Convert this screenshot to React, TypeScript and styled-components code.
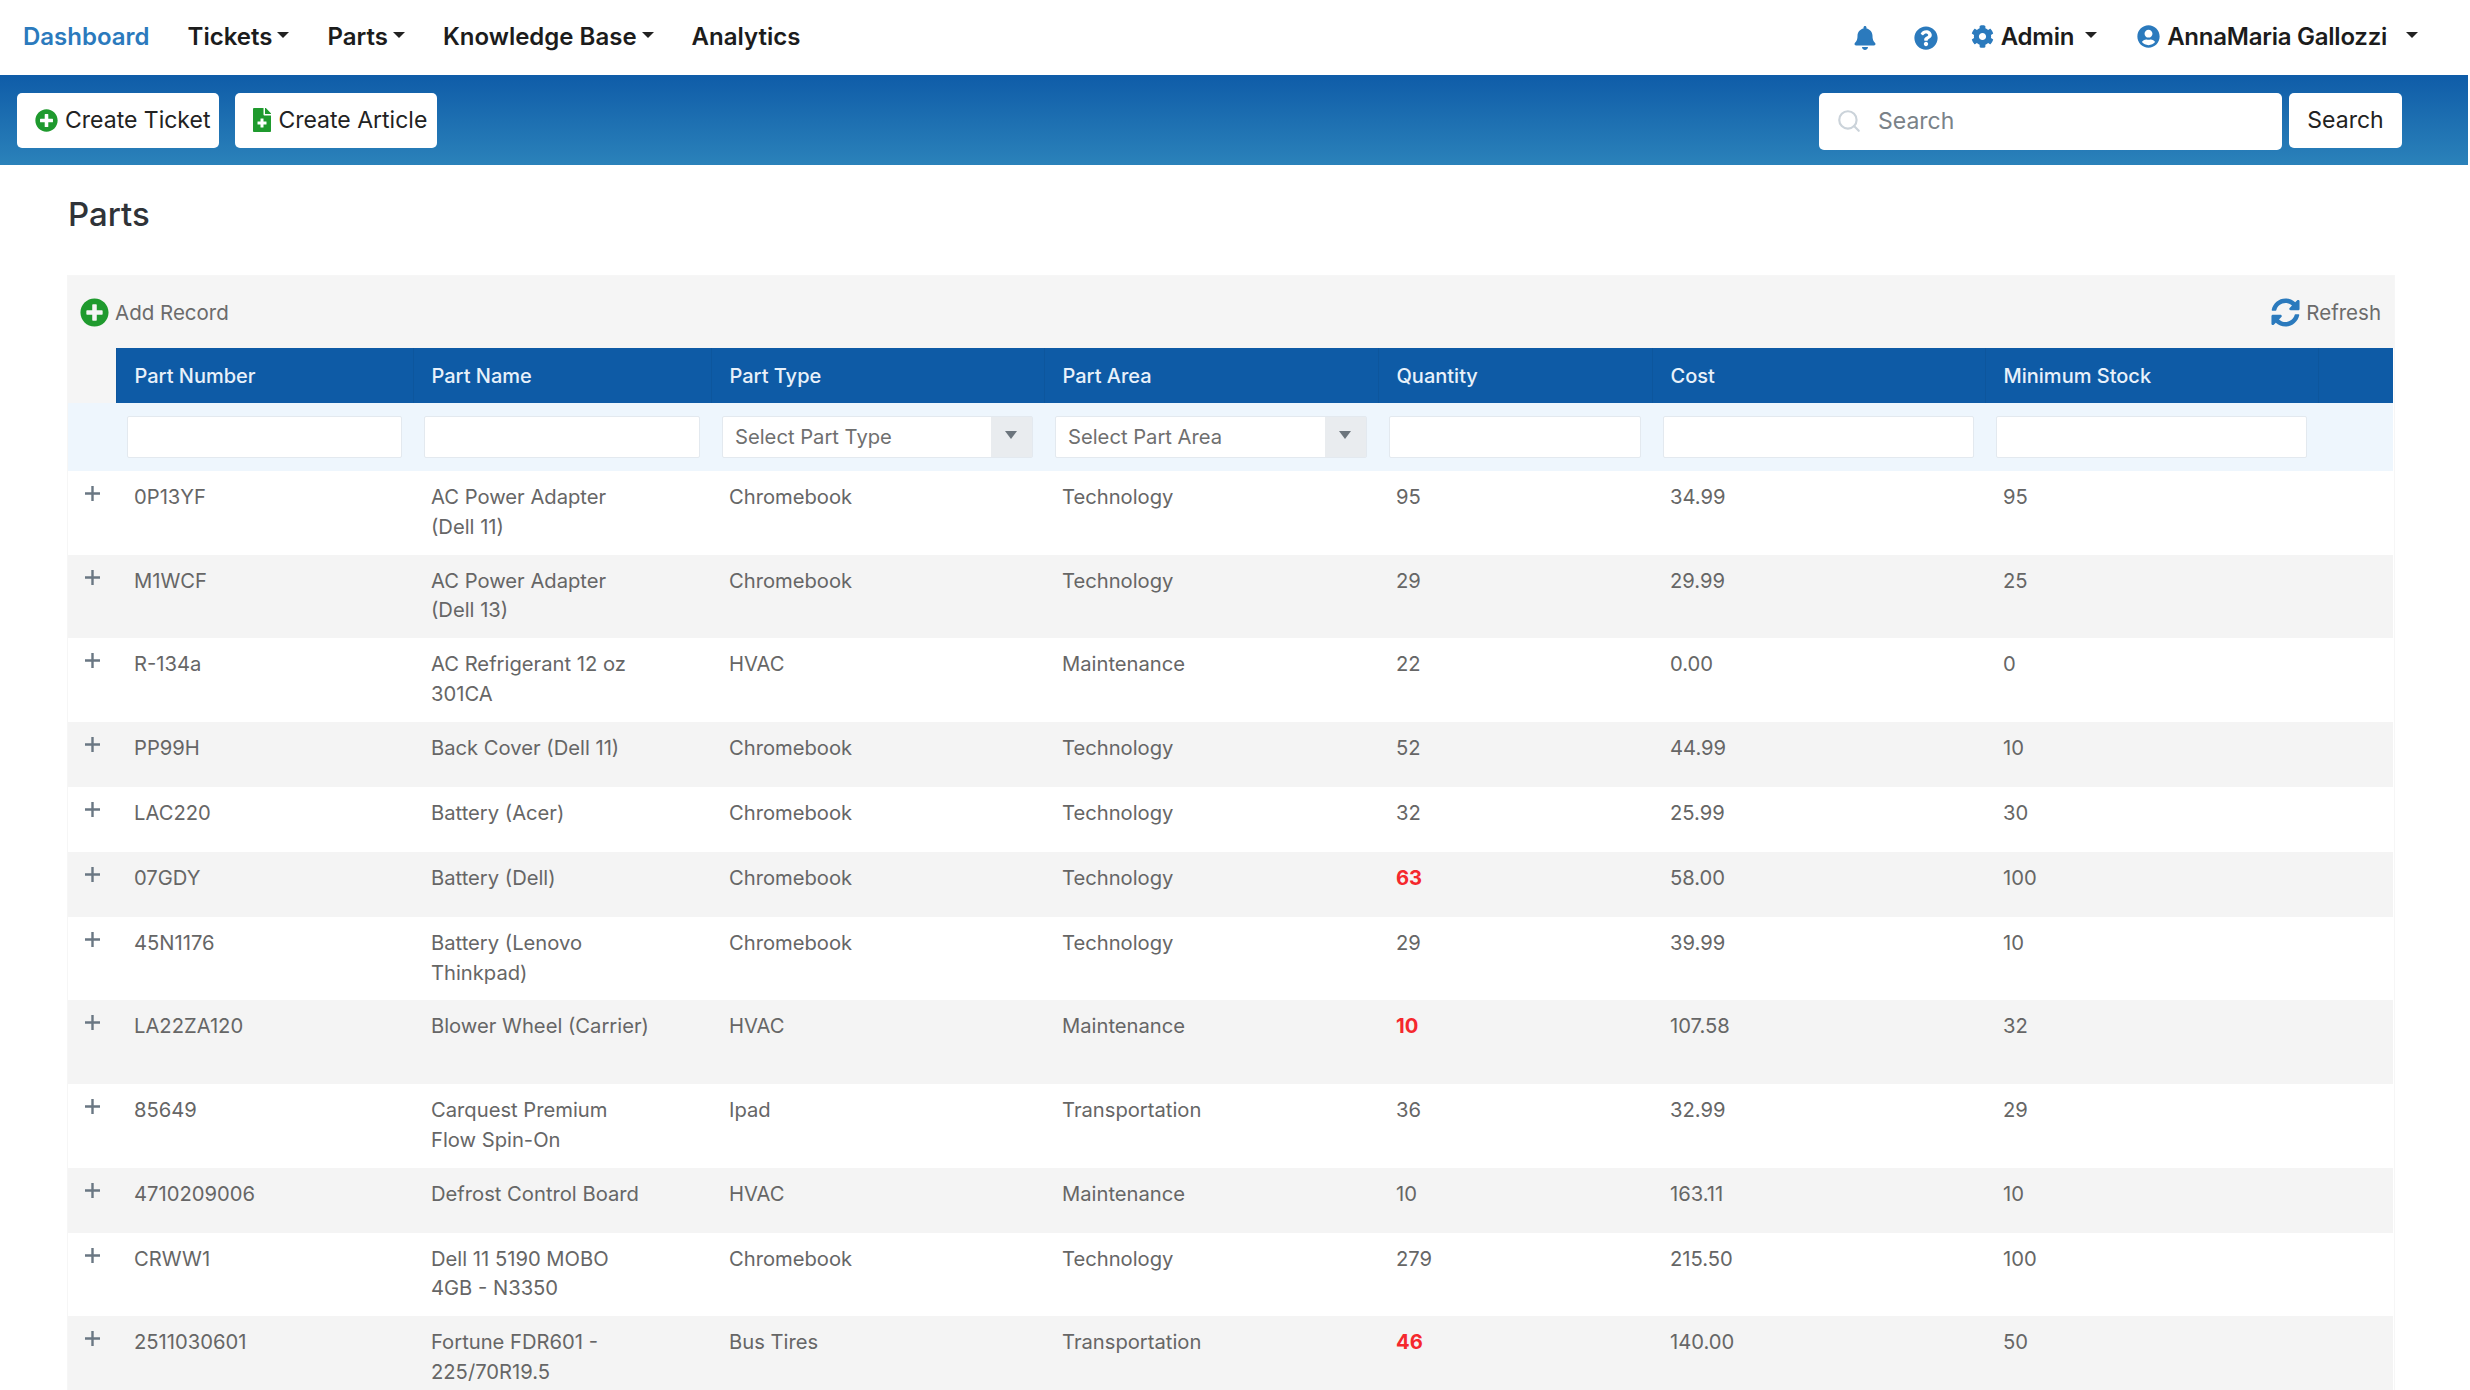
import React from "react";
import styled, { createGlobalStyle } from "styled-components";
import {
  FaBell,
  FaCog,
  FaFileMedical,
  FaPlusCircle,
  FaQuestionCircle,
  FaSyncAlt,
  FaUserCircle,
} from "react-icons/fa";
import { Search as SearchIcon } from "lucide-react";

const FONT = `Inter, "Liberation Sans", sans-serif`;

const parts = [
  ["0P13YF", "AC Power Adapter (Dell 11)", "Chromebook", "Technology", "95", "34.99", "95"],
  ["M1WCF", "AC Power Adapter (Dell 13)", "Chromebook", "Technology", "29", "29.99", "25"],
  ["R-134a", "AC Refrigerant 12 oz 301CA", "HVAC", "Maintenance", "22", "0.00", "0"],
  ["PP99H", "Back Cover (Dell 11)", "Chromebook", "Technology", "52", "44.99", "10"],
  ["LAC220", "Battery (Acer)", "Chromebook", "Technology", "32", "25.99", "30"],
  ["07GDY", "Battery (Dell)", "Chromebook", "Technology", "63", "58.00", "100"],
  ["45N1176", "Battery (Lenovo Thinkpad)", "Chromebook", "Technology", "29", "39.99", "10"],
  ["LA22ZA120", "Blower Wheel (Carrier)", "HVAC", "Maintenance", "10", "107.58", "32"],
  ["85649", "Carquest Premium Flow Spin-On", "Ipad", "Transportation", "36", "32.99", "29"],
  ["4710209006", "Defrost Control Board", "HVAC", "Maintenance", "10", "163.11", "10"],
  ["CRWW1", "Dell 11 5190 MOBO 4GB - N3350", "Chromebook", "Technology", "279", "215.50", "100"],
  ["2511030601", "Fortune FDR601 - 225/70R19.5", "Bus Tires", "Transportation", "46", "140.00", "50"],
];

const columns = [48, 297, 298, 333, 334, 274, 333, 333, 75];

export default function App() {
  return (
    <>
      <GlobalStyle />
      <Page>
        <TopNav>
          <NavLinks>
            <NavLink $active>Dashboard</NavLink>
            <NavLink>
              Tickets
              <Caret />
            </NavLink>
            <NavLink>
              Parts
              <Caret />
            </NavLink>
            <NavLink>
              Knowledge Base
              <Caret />
            </NavLink>
            <NavLink>Analytics</NavLink>
          </NavLinks>
          <NavRight>
            <NavIcons>
              <NavIcon>
                <FaBell size={24} />
              </NavIcon>
              <NavIcon>
                <FaQuestionCircle size={24} />
              </NavIcon>
            </NavIcons>
            <NavMenu>
              <FaCog size={23} color="#2b7abd" />
              Admin
              <MenuCaret $gap={4} $after={7} />
            </NavMenu>
            <NavMenu>
              <FaUserCircle size={23} color="#2b7abd" />
              AnnaMaria Gallozzi
              <MenuCaret $gap={12} />
            </NavMenu>
          </NavRight>
        </TopNav>

        <ActionBar>
          <ActionGroup>
            <ActionButton>
              <FaPlusCircle size={23} color="#1f9a2e" />
              Create Ticket
            </ActionButton>
            <ActionButton>
              <ArticleIcon />
              Create Article
            </ActionButton>
          </ActionGroup>
          <SearchGroup>
            <SearchBox>
              <SearchIcon size={26} color="#cbd3da" strokeWidth={2} />
              <SearchInput placeholder="Search" />
            </SearchBox>
            <SearchButton>Search</SearchButton>
          </SearchGroup>
        </ActionBar>

        <Main>
          <Title>Parts</Title>
          <Grid>
            <Toolbar>
              <ToolLink>
                <FaPlusCircle size={29} color="#1f9a2e" />
                Add Record
              </ToolLink>
              <ToolLink>
                <FaSyncAlt size={29} color="#2b7abd" />
                Refresh
              </ToolLink>
            </Toolbar>
            <Table>
              <colgroup>
                {columns.map((w, i) => (
                  <col key={i} width={w} />
                ))}
              </colgroup>
              <thead>
                <tr>
                  <CornerCell />
                  <HeadCell>Part Number</HeadCell>
                  <HeadCell>Part Name</HeadCell>
                  <HeadCell>Part Type</HeadCell>
                  <HeadCell>Part Area</HeadCell>
                  <HeadCell>Quantity</HeadCell>
                  <HeadCell>Cost</HeadCell>
                  <HeadCell>Minimum Stock</HeadCell>
                  <HeadCell />
                </tr>
                <tr>
                  <FilterCell />
                  <FilterCell>
                    <FilterInput />
                  </FilterCell>
                  <FilterCell>
                    <FilterInput />
                  </FilterCell>
                  <FilterCell>
                    <FilterSelect>
                      <SelectLabel>Select Part Type</SelectLabel>
                      <SelectArrow />
                    </FilterSelect>
                  </FilterCell>
                  <FilterCell>
                    <FilterSelect>
                      <SelectLabel>Select Part Area</SelectLabel>
                      <SelectArrow />
                    </FilterSelect>
                  </FilterCell>
                  <FilterCell>
                    <FilterInput />
                  </FilterCell>
                  <FilterCell>
                    <FilterInput />
                  </FilterCell>
                  <FilterCell>
                    <FilterInput />
                  </FilterCell>
                  <FilterCell />
                </tr>
              </thead>
              <tbody>
                {parts.map((row) => (
                  <Row key={row[0]} $tall={row[0] === "LA22ZA120"}>
                    <ExpandCell>
                      <svg width="15" height="15" viewBox="0 0 15 15">
                        <path d="M7.5 0v15M0 7.5h15" stroke="#6a7783" strokeWidth="2.4" fill="none" />
                      </svg>
                    </ExpandCell>
                    {row.map((value, i) => (
                      <Cell key={i}>
                        {i === 4 && Number(value) < Number(row[6]) ? <LowStock>{value}</LowStock> : value}
                      </Cell>
                    ))}
                    <Cell />
                  </Row>
                ))}
              </tbody>
            </Table>
          </Grid>
        </Main>
      </Page>
    </>
  );
}

const GlobalStyle = createGlobalStyle`
  html, body {
    margin: 0;
    height: 100%;
    background: #fff;
    overflow: hidden;
  }
  * {
    box-sizing: border-box;
  }
`;

const Page = styled.div`
  width: 2468px;
  height: 1390px;
  overflow: hidden;
  font-family: ${FONT};
  color: #666;
`;

const TopNav = styled.nav`
  height: 75px;
  display: flex;
  align-items: center;
  justify-content: space-between;
  padding: 0 50px 3px 23px;
  background: #fff;
`;

const NavLinks = styled.div`
  display: flex;
  align-items: center;
  gap: 38px;
`;

const NavLink = styled.a<{ $active?: boolean }>`
  display: flex;
  align-items: center;
  font-size: 24px;
  font-weight: 600;
  color: ${(p) => (p.$active ? "#2b7abd" : "#1c1c1c")};
`;

const Caret = styled.span`
  width: 0;
  height: 0;
  margin: 0 0 3px 5px;
  border-left: 6px solid transparent;
  border-right: 6px solid transparent;
  border-top: 6px solid #222;
`;

const MenuCaret = styled(Caret)<{ $gap: number; $after?: number }>`
  margin-left: ${(p) => p.$gap}px;
  margin-right: ${(p) => p.$after ?? 0}px;
`;

const NavRight = styled.div`
  display: flex;
  align-items: center;
  gap: 33px;
`;

const NavIcons = styled.div`
  display: flex;
  align-items: center;
  gap: 37px;
`;

const NavIcon = styled.span`
  display: flex;
  margin-top: 4px;
  color: #2b7abd;
`;

const NavMenu = styled.a`
  display: flex;
  align-items: center;
  gap: 7px;
  font-size: 24px;
  font-weight: 600;
  letter-spacing: -0.25px;
  color: #1c1c1c;
`;

const ActionBar = styled.div`
  height: 90px;
  display: flex;
  align-items: center;
  justify-content: space-between;
  padding: 0 66px 0 17px;
  background: linear-gradient(180deg, #0f5ca8 0%, #2b82ba 100%);
`;

const ActionGroup = styled.div`
  display: flex;
  gap: 16px;
`;

const ActionButton = styled.button`
  min-width: 202px;
  height: 55px;
  display: flex;
  align-items: center;
  gap: 7px;
  padding: 0 9px 0 18px;
  border: 0;
  border-radius: 5px;
  background: #fff;
  font-family: ${FONT};
  font-size: 23px;
  color: #222;
`;

const ArticleIcon = styled(FaFileMedical)`
  width: 18px;
  height: 24px;
  color: #1f9a2e;
`;

const SearchGroup = styled.div`
  display: flex;
  align-items: flex-start;
  gap: 7px;
  padding-top: 2px;
`;

const SearchBox = styled.label`
  width: 463px;
  height: 57px;
  display: flex;
  align-items: center;
  gap: 16px;
  padding: 0 16px 0 17px;
  border-radius: 5px;
  background: #fff;
`;

const SearchInput = styled.input`
  flex: 1;
  min-width: 0;
  border: 0;
  outline: 0;
  padding: 0;
  font-family: ${FONT};
  font-size: 23px;
  color: #333;

  &::placeholder {
    color: #7a8288;
    opacity: 1;
  }
`;

const SearchButton = styled.button`
  width: 113px;
  height: 55px;
  border: 0;
  border-radius: 5px;
  background: #fff;
  font-family: ${FONT};
  font-size: 23px;
  color: #222;
`;

const Main = styled.main`
  padding: 0 74px 0 68px;
`;

const Title = styled.h1`
  margin: 0;
  height: 111px;
  padding-top: 28px;
  font-size: 33px;
  font-weight: 500;
  line-height: 42px;
  color: #2f3338;
`;

const Grid = styled.section`
  box-shadow: 0 0 0 1px #f6f6f6;
`;

const Toolbar = styled.div`
  height: 72px;
  display: flex;
  align-items: center;
  justify-content: space-between;
  padding: 0 13px 0 12px;
  background: #f5f5f5;
`;

const ToolLink = styled.a`
  display: flex;
  align-items: center;
  gap: 6px;
  font-size: 20.5px;
  color: #6b6b6b;
`;

const Table = styled.table`
  width: 2325px;
  table-layout: fixed;
  border-collapse: collapse;
  font-size: 20.2px;
`;

const CornerCell = styled.th`
  height: 55px;
  padding: 0;
  background: #f5f5f5;
`;

const HeadCell = styled.th`
  height: 55px;
  padding: 0 18px;
  border-left: 1px solid rgba(0, 0, 0, 0.05);
  background: #0e5ba6;
  text-align: left;
  font-size: 20px;
  font-weight: 500;
  color: #e8f1fa;
`;

const FilterCell = styled.td`
  height: 68px;
  padding: 0 11px;
  background: #eef6fd;
`;

const FilterInput = styled.input`
  display: block;
  width: 100%;
  height: 42px;
  border: 1px solid #e3e9ef;
  border-radius: 2px;
  background: #fff;
`;

const FilterSelect = styled.div`
  height: 42px;
  display: flex;
  align-items: stretch;
  border: 1px solid #e3e9ef;
  border-radius: 2px;
  background: #fff;
`;

const SelectLabel = styled.span`
  flex: 1;
  padding-left: 12px;
  font-size: 20.2px;
  line-height: 39px;
  white-space: nowrap;
  overflow: hidden;
  color: #6f6f6f;
`;

const SelectArrow = styled.span`
  position: relative;
  width: 41px;
  background: #e9ecef;

  &::after {
    content: "";
    position: absolute;
    top: 14px;
    left: 14px;
    border-left: 6px solid transparent;
    border-right: 6px solid transparent;
    border-top: 8px solid #6c757d;
  }
`;

const Row = styled.tr<{ $tall?: boolean }>`
  height: ${(p) => (p.$tall ? "83.6px" : "65px")};
  background: #fff;

  &:nth-child(even) {
    background: #f4f4f4;
  }
`;

const ExpandCell = styled.td`
  padding: 15px 0 0;
  vertical-align: top;
  text-align: center;
  line-height: 0;
`;

const Cell = styled.td`
  padding: 11px 59px 13px 18px;
  vertical-align: top;
  line-height: 29.8px;
  color: #666;
`;

const LowStock = styled.span`
  font-weight: 700;
  color: #f5282d;
`;
